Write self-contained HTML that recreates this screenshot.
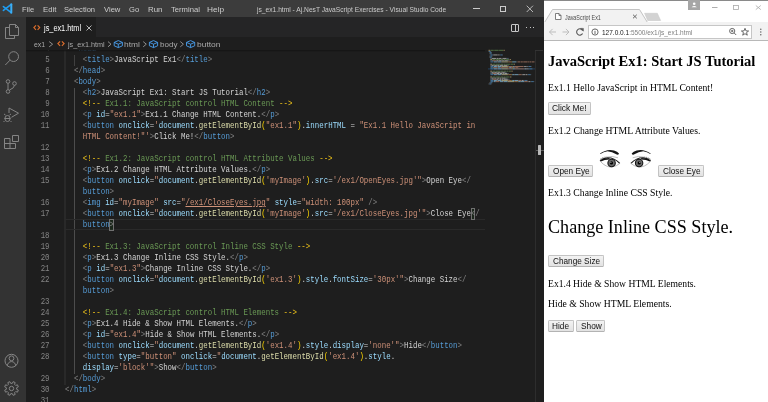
<!DOCTYPE html>
<html><head><meta charset="utf-8">
<style>
*{box-sizing:border-box}
html,body{margin:0;padding:0;width:768px;height:402px;overflow:hidden;background:#1e1e1e}
.abs{position:absolute}
#vsc{position:absolute;left:0;top:0;width:544px;height:402px;background:#1e1e1e;overflow:hidden;font-family:"Liberation Sans",sans-serif}
#title{position:absolute;left:0;top:0;width:544px;height:17px;background:#3c3c3c}
.lbl{position:absolute;font-family:"Liberation Sans",sans-serif;line-height:normal;white-space:pre;transform-origin:0 0}
#act{position:absolute;left:0;top:17px;width:26px;height:385px;background:#333333}
#tabs{position:absolute;left:26px;top:17px;width:518px;height:20px;background:#252526}
#tab1{position:absolute;left:26px;top:17px;width:70px;height:20px;background:#1e1e1e}
#bcshadow{position:absolute;left:26px;top:50px;width:459px;height:2px;background:linear-gradient(#141414,rgba(0,0,0,0))}
#ed{position:absolute;left:26px;top:50px;width:510px;height:352px;overflow:hidden;will-change:transform}
.row{position:absolute;left:38.75px;margin-top:-1px;height:11px;line-height:11px;font-family:"Liberation Mono",monospace;font-size:8.3px;transform:scaleX(0.8956);transform-origin:0 0;white-space:pre;color:#d4d4d4}
.ln{position:absolute;left:0px;width:23.6px;margin-top:-1px;text-align:right;height:11px;line-height:11px;font-family:"Liberation Mono",monospace;font-size:8.3px;transform:scaleX(0.8956);transform-origin:100% 0;color:#858585}
.ln.cur{color:#c6c6c6}
.br{color:#808080}.tag{color:#569cd6}.attr{color:#9cdcfe}.str{color:#ce9178}.txt{color:#d4d4d4}
.com{color:#6a9955}.cb{color:#f0c419}.fn{color:#dcdcaa}.par{color:#ffd700}.var{color:#9cdcfe}.op{color:#d4d4d4}
.ul{text-decoration:underline}
.bmb{position:absolute;height:12px;border:1px solid #707070;background:rgba(0,100,0,0.12)}
.guide{position:absolute;width:1px}
.g0{left:38px;width:2px;background:#292929}
.g1{left:48px;background:#404040}
.g2{left:48px;background:#4c4c4c}
.curline{position:absolute;left:38.6px;margin-top:-1px;width:420px;height:11px;border-top:1px solid #2a2a2a;border-bottom:1px solid #2a2a2a}
#chrome{position:absolute;left:544px;top:0;width:224px;height:402px;background:#ffffff;overflow:hidden;font-family:"Liberation Sans",sans-serif}
.btn{position:absolute;border:1px solid #c3c3c3;border-bottom-color:#b3b3b3;border-radius:1.5px;background:linear-gradient(#f3f3f3,#e2e2e2)}
</style></head><body>
<div id="vsc">
  <div id="title">
    <svg class="abs" style="left:0;top:0" width="20" height="17" viewBox="0 0 20 17">
      <path d="M10.9 4.6 L3.4 10.4 M3.4 6.6 L10.9 12.4" stroke="#1f9cf0" stroke-width="1.6" stroke-linecap="round"/>
      <path d="M11.3 4.3 V12.8" stroke="#3aaef6" stroke-width="2" stroke-linecap="round"/>
    </svg>
    <div class="abs" style="left:473px;top:8px;width:7px;height:1px;background:#cccccc"></div>
    <div class="abs" style="left:500px;top:6px;width:6px;height:6px;border:1px solid #cccccc"></div>
    <svg class="abs" style="left:526px;top:5px" width="8" height="8" viewBox="0 0 8 8"><path d="M0.7 0.7 L7 7 M7 0.7 L0.7 7" stroke="#cccccc" stroke-width="0.85"/></svg>
  </div>
  <div id="act">
    <!-- files -->
    <svg class="abs" style="left:0;top:0" width="26" height="385" viewBox="0 17 26 385" fill="none" stroke="#858585" stroke-width="1">
      <path d="M9.5 24.5 H15.5 L18.5 27.5 V35.5 H9.5 Z M15.5 24.5 V27.5 H18.5"/>
      <path d="M9.5 27.5 H5.5 V38.5 H14.5 V35.5"/>
      <circle cx="13.6" cy="56.6" r="4.9"/>
      <path d="M10.1 60.1 L5.3 65"/>
      <circle cx="8" cy="81.5" r="1.8"/><circle cx="14.5" cy="83.5" r="1.8"/><circle cx="8" cy="91.5" r="1.8"/>
      <path d="M8 83.3 V89.7 M14.5 85.3 Q14.5 88 9.5 90"/>
      <path d="M9 113 V108 L18.5 113.2 L11.5 117.3"/>
      <ellipse cx="7.5" cy="118.5" rx="2.6" ry="3"/>
      <path d="M4.5 118.5 H10.5 M5.5 115 L4 114 M9.5 115 L11 114 M4.5 121 L3.5 122 M10.5 121 L11.5 122"/>
      <path d="M4.5 138.5 H10 V148.5 H4.5 Z M4.5 143.5 H15.5 V148.5 H10"/>
      <path d="M12.5 135.5 H18.5 V141.5 H12.5 Z"/>
      <circle cx="11.5" cy="360.8" r="6.5"/>
      <circle cx="11.5" cy="358.3" r="2.4"/>
      <path d="M7.2 366 Q8 361.6 11.5 361.6 Q15 361.6 15.8 366"/>
      <path d="M16.64 389.27 L18.31 390.13 L17.47 392.16 L15.68 391.59 L14.59 392.68 L15.16 394.47 L13.13 395.31 L12.27 393.64 L10.73 393.64 L9.87 395.31 L7.84 394.47 L8.41 392.68 L7.32 391.59 L5.53 392.16 L4.69 390.13 L6.36 389.27 L6.36 387.73 L4.69 386.87 L5.53 384.84 L7.32 385.41 L8.41 384.32 L7.84 382.53 L9.87 381.69 L10.73 383.36 L12.27 383.36 L13.13 381.69 L15.16 382.53 L14.59 384.32 L15.68 385.41 L17.47 384.84 L18.31 386.87 L16.64 387.73 Z" stroke-linejoin="round"/>
      <circle cx="11.5" cy="388.5" r="2.2"/>
    </svg>
  </div>
  <div id="tabs"></div>
  <div id="tab1"></div>
  <svg class="abs" style="left:0;top:0" width="544" height="60" viewBox="0 0 544 60" fill="none">
    <g stroke="#dd6e2c" stroke-width="1.15" stroke-linejoin="miter">
      <path d="M36 25.4 L33.9 27.6 L36 29.8 M37.6 25.4 L39.7 27.6 L37.6 29.8"/>
      <path d="M60.1 41.3 L57.9 43.6 L60.1 45.9 M61.9 41.3 L64.1 43.6 L61.9 45.9"/>
    </g>
    <g stroke="#a9a9a9" stroke-width="0.8">
      <path d="M49.2 41.6 L52.6 44.2 L49.2 46.8"/>
      <path d="M108 41.6 L111 44.2 L108 46.8"/>
      <path d="M143.2 41.6 L146.3 44.2 L143.2 46.8"/>
      <path d="M180.3 41.6 L183.4 44.2 L180.3 46.8"/>
    </g>
    <g stroke="#4aa0f0" stroke-width="0.9" stroke-linejoin="round">
      <path d="M118.3 40.6 L122.4 42.4 V45.8 L118.3 47.6 L114.2 45.8 V42.4 Z M114.2 42.4 L118.3 44.2 L122.4 42.4 M118.3 44.2 V47.6"/>
      <g transform="translate(35.2 0)"><path d="M118.3 40.6 L122.4 42.4 V45.8 L118.3 47.6 L114.2 45.8 V42.4 Z M114.2 42.4 L118.3 44.2 L122.4 42.4 M118.3 44.2 V47.6"/></g>
      <g transform="translate(72.3 0)"><path d="M118.3 40.6 L122.4 42.4 V45.8 L118.3 47.6 L114.2 45.8 V42.4 Z M114.2 42.4 L118.3 44.2 L122.4 42.4 M118.3 44.2 V47.6"/></g>
    </g>
  </svg>
  <svg class="abs" style="left:85.6px;top:25px" width="6" height="6" viewBox="0 0 6 6"><path d="M0.5 0.5 L5.5 5.5 M5.5 0.5 L0.5 5.5" stroke="#c5c5c5" stroke-width="0.9"/></svg>
  <!-- split + more -->
  <div class="abs" style="left:511px;top:23.5px;width:8px;height:8px;border:1px solid #c5c5c5;border-radius:1px"></div>
  <div class="abs" style="left:514.5px;top:23.5px;width:1px;height:8px;background:#c5c5c5"></div>
  <div class="abs" style="left:526px;top:27px;width:1.2px;height:1.2px;background:#c5c5c5"></div>
  <div class="abs" style="left:529.5px;top:27px;width:1.2px;height:1.2px;background:#c5c5c5"></div>
  <div class="abs" style="left:533px;top:27px;width:1.2px;height:1.2px;background:#c5c5c5"></div>
  <!-- breadcrumbs -->
  <div id="ed">
  <div class="ln" style="top:-6px">4</div>
<div class="ln" style="top:5px">5</div>
<div class="ln" style="top:16px">6</div>
<div class="ln" style="top:27px">7</div>
<div class="ln" style="top:38px">8</div>
<div class="ln" style="top:49px">9</div>
<div class="ln" style="top:60px">10</div>
<div class="ln" style="top:71px">11</div>
<div class="ln" style="top:93px">12</div>
<div class="ln" style="top:104px">13</div>
<div class="ln" style="top:115px">14</div>
<div class="ln" style="top:126px">15</div>
<div class="ln" style="top:148px">16</div>
<div class="ln" style="top:159px">17</div>
<div class="ln" style="top:181px">18</div>
<div class="ln" style="top:192px">19</div>
<div class="ln" style="top:203px">20</div>
<div class="ln" style="top:214px">21</div>
<div class="ln" style="top:225px">22</div>
<div class="ln" style="top:247px">23</div>
<div class="ln" style="top:258px">24</div>
<div class="ln" style="top:269px">25</div>
<div class="ln" style="top:280px">26</div>
<div class="ln" style="top:291px">27</div>
<div class="ln" style="top:302px">28</div>
<div class="ln" style="top:324px">29</div>
<div class="ln" style="top:335px">30</div>
<div class="ln" style="top:346px">31</div>
  <div class="guide g0" style="top:-6px;height:341px"></div>
<div class="guide g1" style="top:5px;height:11px"></div>
<div class="guide g2" style="top:38px;height:286px"></div><div class="curline" style="top:170px"></div><div class="bmb" style="left:444.61px;top:158px;width:4.86px"></div><div class="bmb" style="left:83.35px;top:169px;width:4.86px"></div>
  <div class="row" style="top:-6px">  <span class="br">&lt;</span><span class="tag">head</span><span class="br">&gt;</span></div>
<div class="row" style="top:5px">    <span class="br">&lt;</span><span class="tag">title</span><span class="br">&gt;</span><span class="txt">JavaScript Ex1</span><span class="br">&lt;/</span><span class="tag">title</span><span class="br">&gt;</span></div>
<div class="row" style="top:16px">  <span class="br">&lt;/</span><span class="tag">head</span><span class="br">&gt;</span></div>
<div class="row" style="top:27px">  <span class="br">&lt;</span><span class="tag">body</span><span class="br">&gt;</span></div>
<div class="row" style="top:38px">    <span class="br">&lt;</span><span class="tag">h2</span><span class="br">&gt;</span><span class="txt">JavaScript Ex1: Start JS Tutorial</span><span class="br">&lt;/</span><span class="tag">h2</span><span class="br">&gt;</span></div>
<div class="row" style="top:49px">    <span class="cb">&lt;!--</span><span class="com"> Ex1.1: JavaScript control HTML Content </span><span class="cb">--&gt;</span></div>
<div class="row" style="top:60px">    <span class="br">&lt;</span><span class="tag">p</span> <span class="attr">id</span><span class="op">=</span><span class="str">&quot;ex1.1&quot;</span><span class="br">&gt;</span><span class="txt">Ex1.1 Change HTML Content.</span><span class="br">&lt;/</span><span class="tag">p</span><span class="br">&gt;</span></div>
<div class="row" style="top:71px">    <span class="br">&lt;</span><span class="tag">button</span> <span class="attr">onclick</span><span class="op">=</span><span class="str">&#x27;</span><span class="var">document</span><span class="op">.</span><span class="fn">getElementById</span><span class="par">(</span><span class="str">&quot;ex1.1&quot;</span><span class="par">)</span><span class="op">.</span><span class="var">innerHTML</span><span class="op"> = </span><span class="str">&quot;Ex1.1 Hello JavaScript in </span></div>
<div class="row" style="top:82px">    <span class="str">HTML Content!&quot;&#x27;</span><span class="br">&gt;</span><span class="txt">Click Me!</span><span class="br">&lt;/</span><span class="tag">button</span><span class="br">&gt;</span></div>
<div class="row" style="top:93px"></div>
<div class="row" style="top:104px">    <span class="cb">&lt;!--</span><span class="com"> Ex1.2: JavaScript control HTML Attribute Values </span><span class="cb">--&gt;</span></div>
<div class="row" style="top:115px">    <span class="br">&lt;</span><span class="tag">p</span><span class="br">&gt;</span><span class="txt">Ex1.2 Change HTML Attribute Values.</span><span class="br">&lt;/</span><span class="tag">p</span><span class="br">&gt;</span></div>
<div class="row" style="top:126px">    <span class="br">&lt;</span><span class="tag">button</span> <span class="attr">onclick</span><span class="op">=</span><span class="str">&quot;</span><span class="var">document</span><span class="op">.</span><span class="fn">getElementById</span><span class="par">(</span><span class="str">&#x27;myImage&#x27;</span><span class="par">)</span><span class="op">.</span><span class="var">src</span><span class="op">=</span><span class="str">&#x27;/ex1/OpenEyes.jpg&#x27;</span><span class="str">&quot;</span><span class="br">&gt;</span><span class="txt">Open Eye</span><span class="br">&lt;</span><span class="br">/</span></div>
<div class="row" style="top:137px">    <span class="tag">button</span><span class="br">&gt;</span></div>
<div class="row" style="top:148px">    <span class="br">&lt;</span><span class="tag">img</span> <span class="attr">id</span><span class="op">=</span><span class="str">&quot;myImage&quot;</span> <span class="attr">src</span><span class="op">=</span><span class="str">&quot;</span><span class="str ul">/ex1/CloseEyes.jpg</span><span class="str">&quot;</span> <span class="attr">style</span><span class="op">=</span><span class="str">&quot;width: 100px&quot;</span> <span class="br">/&gt;</span></div>
<div class="row" style="top:159px">    <span class="br">&lt;</span><span class="tag">button</span> <span class="attr">onclick</span><span class="op">=</span><span class="str">&quot;</span><span class="var">document</span><span class="op">.</span><span class="fn">getElementById</span><span class="par">(</span><span class="str">&#x27;myImage&#x27;</span><span class="par">)</span><span class="op">.</span><span class="var">src</span><span class="op">=</span><span class="str">&#x27;/ex1/CloseEyes.jpg&#x27;</span><span class="str">&quot;</span><span class="br">&gt;</span><span class="txt">Close Eye</span><span class="br">&lt;</span><span class="br">/</span></div>
<div class="row" style="top:170px">    <span class="tag">button</span><span class="br">&gt;</span></div>
<div class="row" style="top:181px"></div>
<div class="row" style="top:192px">    <span class="cb">&lt;!--</span><span class="com"> Ex1.3: JavaScript control Inline CSS Style </span><span class="cb">--&gt;</span></div>
<div class="row" style="top:203px">    <span class="br">&lt;</span><span class="tag">p</span><span class="br">&gt;</span><span class="txt">Ex1.3 Change Inline CSS Style.</span><span class="br">&lt;/</span><span class="tag">p</span><span class="br">&gt;</span></div>
<div class="row" style="top:214px">    <span class="br">&lt;</span><span class="tag">p</span> <span class="attr">id</span><span class="op">=</span><span class="str">&quot;ex1.3&quot;</span><span class="br">&gt;</span><span class="txt">Change Inline CSS Style.</span><span class="br">&lt;/</span><span class="tag">p</span><span class="br">&gt;</span></div>
<div class="row" style="top:225px">    <span class="br">&lt;</span><span class="tag">button</span> <span class="attr">onclick</span><span class="op">=</span><span class="str">&quot;</span><span class="var">document</span><span class="op">.</span><span class="fn">getElementById</span><span class="par">(</span><span class="str">&#x27;ex1.3&#x27;</span><span class="par">)</span><span class="op">.</span><span class="var">style</span><span class="op">.</span><span class="var">fontSize</span><span class="op">=</span><span class="str">&#x27;30px&#x27;</span><span class="str">&quot;</span><span class="br">&gt;</span><span class="txt">Change Size</span><span class="br">&lt;/</span></div>
<div class="row" style="top:236px">    <span class="tag">button</span><span class="br">&gt;</span></div>
<div class="row" style="top:247px"></div>
<div class="row" style="top:258px">    <span class="cb">&lt;!--</span><span class="com"> Ex1.4: JavaScript control HTML Elements </span><span class="cb">--&gt;</span></div>
<div class="row" style="top:269px">    <span class="br">&lt;</span><span class="tag">p</span><span class="br">&gt;</span><span class="txt">Ex1.4 Hide &amp; Show HTML Elements.</span><span class="br">&lt;/</span><span class="tag">p</span><span class="br">&gt;</span></div>
<div class="row" style="top:280px">    <span class="br">&lt;</span><span class="tag">p</span> <span class="attr">id</span><span class="op">=</span><span class="str">&quot;ex1.4&quot;</span><span class="br">&gt;</span><span class="txt">Hide &amp; Show HTML Elements.</span><span class="br">&lt;/</span><span class="tag">p</span><span class="br">&gt;</span></div>
<div class="row" style="top:291px">    <span class="br">&lt;</span><span class="tag">button</span> <span class="attr">onclick</span><span class="op">=</span><span class="str">&quot;</span><span class="var">document</span><span class="op">.</span><span class="fn">getElementById</span><span class="par">(</span><span class="str">&#x27;ex1.4&#x27;</span><span class="par">)</span><span class="op">.</span><span class="var">style</span><span class="op">.</span><span class="var">display</span><span class="op">=</span><span class="str">&#x27;none&#x27;</span><span class="str">&quot;</span><span class="br">&gt;</span><span class="txt">Hide</span><span class="br">&lt;/</span><span class="tag">button</span><span class="br">&gt;</span></div>
<div class="row" style="top:302px">    <span class="br">&lt;</span><span class="tag">button</span> <span class="attr">type</span><span class="op">=</span><span class="str">&quot;button&quot;</span> <span class="attr">onclick</span><span class="op">=</span><span class="str">&quot;</span><span class="var">document</span><span class="op">.</span><span class="fn">getElementById</span><span class="par">(</span><span class="str">&#x27;ex1.4&#x27;</span><span class="par">)</span><span class="op">.</span><span class="var">style</span><span class="op">.</span></div>
<div class="row" style="top:313px">    <span class="var">display</span><span class="op">=</span><span class="str">&#x27;block&#x27;</span><span class="str">&quot;</span><span class="br">&gt;</span><span class="txt">Show</span><span class="br">&lt;/</span><span class="tag">button</span><span class="br">&gt;</span></div>
<div class="row" style="top:324px">  <span class="br">&lt;/</span><span class="tag">body</span><span class="br">&gt;</span></div>
<div class="row" style="top:335px"><span class="br">&lt;/</span><span class="tag">html</span><span class="br">&gt;</span></div>
<div class="row" style="top:346px"></div>
  </div>
  <svg class="abs" style="left:0;top:0;opacity:0.65" width="544" height="402" viewBox="0 0 544 402"><rect x="488" y="68.16" width="47" height="1.4" fill="#264f78" opacity="0.8"/><rect x="488.50" y="49.80" width="1.76" height="1" fill="#d7ba7d"/><rect x="490.70" y="49.80" width="3.08" height="1" fill="#6a9955"/><rect x="494.22" y="49.80" width="4.40" height="1" fill="#6a9955"/><rect x="499.06" y="49.80" width="3.96" height="1" fill="#6a9955"/><rect x="503.46" y="49.80" width="1.32" height="1" fill="#d7ba7d"/><rect x="488.50" y="50.96" width="0.44" height="1" fill="#808080"/><rect x="488.94" y="50.96" width="1.76" height="1" fill="#569cd6"/><rect x="490.70" y="50.96" width="0.44" height="1" fill="#808080"/><rect x="489.38" y="52.12" width="0.44" height="1" fill="#808080"/><rect x="489.82" y="52.12" width="1.76" height="1" fill="#569cd6"/><rect x="491.58" y="52.12" width="0.44" height="1" fill="#808080"/><rect x="489.38" y="53.28" width="0.44" height="1" fill="#808080"/><rect x="489.82" y="53.28" width="1.76" height="1" fill="#569cd6"/><rect x="491.58" y="53.28" width="0.44" height="1" fill="#808080"/><rect x="490.26" y="54.44" width="0.44" height="1" fill="#808080"/><rect x="490.70" y="54.44" width="2.20" height="1" fill="#569cd6"/><rect x="492.90" y="54.44" width="0.44" height="1" fill="#808080"/><rect x="493.34" y="54.44" width="4.40" height="1" fill="#d4d4d4"/><rect x="498.18" y="54.44" width="1.32" height="1" fill="#d4d4d4"/><rect x="499.50" y="54.44" width="0.88" height="1" fill="#808080"/><rect x="500.38" y="54.44" width="2.20" height="1" fill="#569cd6"/><rect x="502.58" y="54.44" width="0.44" height="1" fill="#808080"/><rect x="489.38" y="55.60" width="0.88" height="1" fill="#808080"/><rect x="490.26" y="55.60" width="1.76" height="1" fill="#569cd6"/><rect x="492.02" y="55.60" width="0.44" height="1" fill="#808080"/><rect x="489.38" y="56.76" width="0.44" height="1" fill="#808080"/><rect x="489.82" y="56.76" width="1.76" height="1" fill="#569cd6"/><rect x="491.58" y="56.76" width="0.44" height="1" fill="#808080"/><rect x="490.26" y="57.92" width="0.44" height="1" fill="#808080"/><rect x="490.70" y="57.92" width="0.88" height="1" fill="#569cd6"/><rect x="491.58" y="57.92" width="0.44" height="1" fill="#808080"/><rect x="492.02" y="57.92" width="4.40" height="1" fill="#d4d4d4"/><rect x="496.86" y="57.92" width="1.76" height="1" fill="#d4d4d4"/><rect x="499.06" y="57.92" width="2.20" height="1" fill="#d4d4d4"/><rect x="501.70" y="57.92" width="0.88" height="1" fill="#d4d4d4"/><rect x="503.02" y="57.92" width="3.52" height="1" fill="#d4d4d4"/><rect x="506.54" y="57.92" width="0.88" height="1" fill="#808080"/><rect x="507.42" y="57.92" width="0.88" height="1" fill="#569cd6"/><rect x="508.30" y="57.92" width="0.44" height="1" fill="#808080"/><rect x="490.26" y="59.08" width="1.76" height="1" fill="#d7ba7d"/><rect x="492.46" y="59.08" width="2.64" height="1" fill="#6a9955"/><rect x="495.54" y="59.08" width="4.40" height="1" fill="#6a9955"/><rect x="500.38" y="59.08" width="3.08" height="1" fill="#6a9955"/><rect x="503.90" y="59.08" width="1.76" height="1" fill="#6a9955"/><rect x="506.10" y="59.08" width="3.08" height="1" fill="#6a9955"/><rect x="509.62" y="59.08" width="1.32" height="1" fill="#d7ba7d"/><rect x="490.26" y="60.24" width="0.44" height="1" fill="#808080"/><rect x="490.70" y="60.24" width="0.44" height="1" fill="#569cd6"/><rect x="491.58" y="60.24" width="0.88" height="1" fill="#9cdcfe"/><rect x="492.46" y="60.24" width="0.44" height="1" fill="#d4d4d4"/><rect x="492.90" y="60.24" width="3.08" height="1" fill="#ce9178"/><rect x="495.98" y="60.24" width="0.44" height="1" fill="#808080"/><rect x="496.42" y="60.24" width="2.20" height="1" fill="#d4d4d4"/><rect x="499.06" y="60.24" width="2.64" height="1" fill="#d4d4d4"/><rect x="502.14" y="60.24" width="1.76" height="1" fill="#d4d4d4"/><rect x="504.34" y="60.24" width="3.52" height="1" fill="#d4d4d4"/><rect x="507.86" y="60.24" width="0.88" height="1" fill="#808080"/><rect x="508.74" y="60.24" width="0.44" height="1" fill="#569cd6"/><rect x="509.18" y="60.24" width="0.44" height="1" fill="#808080"/><rect x="490.26" y="61.40" width="0.44" height="1" fill="#808080"/><rect x="490.70" y="61.40" width="2.64" height="1" fill="#569cd6"/><rect x="493.78" y="61.40" width="3.08" height="1" fill="#9cdcfe"/><rect x="496.86" y="61.40" width="0.44" height="1" fill="#d4d4d4"/><rect x="497.30" y="61.40" width="0.44" height="1" fill="#ce9178"/><rect x="497.74" y="61.40" width="3.52" height="1" fill="#9cdcfe"/><rect x="501.26" y="61.40" width="0.44" height="1" fill="#d4d4d4"/><rect x="501.70" y="61.40" width="6.16" height="1" fill="#dcdcaa"/><rect x="507.86" y="61.40" width="0.44" height="1" fill="#ffd700"/><rect x="508.30" y="61.40" width="3.08" height="1" fill="#ce9178"/><rect x="511.38" y="61.40" width="0.44" height="1" fill="#ffd700"/><rect x="511.82" y="61.40" width="0.44" height="1" fill="#d4d4d4"/><rect x="512.26" y="61.40" width="3.96" height="1" fill="#9cdcfe"/><rect x="516.66" y="61.40" width="0.44" height="1" fill="#d4d4d4"/><rect x="517.54" y="61.40" width="2.64" height="1" fill="#ce9178"/><rect x="520.62" y="61.40" width="2.20" height="1" fill="#ce9178"/><rect x="523.26" y="61.40" width="4.40" height="1" fill="#ce9178"/><rect x="528.10" y="61.40" width="0.88" height="1" fill="#ce9178"/><rect x="529.42" y="61.40" width="1.76" height="1" fill="#ce9178"/><rect x="531.62" y="61.40" width="2.88" height="1" fill="#ce9178"/><rect x="490.26" y="63.72" width="1.76" height="1" fill="#d7ba7d"/><rect x="492.46" y="63.72" width="2.64" height="1" fill="#6a9955"/><rect x="495.54" y="63.72" width="4.40" height="1" fill="#6a9955"/><rect x="500.38" y="63.72" width="3.08" height="1" fill="#6a9955"/><rect x="503.90" y="63.72" width="1.76" height="1" fill="#6a9955"/><rect x="506.10" y="63.72" width="3.96" height="1" fill="#6a9955"/><rect x="510.50" y="63.72" width="2.64" height="1" fill="#6a9955"/><rect x="513.58" y="63.72" width="1.32" height="1" fill="#d7ba7d"/><rect x="490.26" y="64.88" width="0.44" height="1" fill="#808080"/><rect x="490.70" y="64.88" width="0.44" height="1" fill="#569cd6"/><rect x="491.14" y="64.88" width="0.44" height="1" fill="#808080"/><rect x="491.58" y="64.88" width="2.20" height="1" fill="#d4d4d4"/><rect x="494.22" y="64.88" width="2.64" height="1" fill="#d4d4d4"/><rect x="497.30" y="64.88" width="1.76" height="1" fill="#d4d4d4"/><rect x="499.50" y="64.88" width="3.96" height="1" fill="#d4d4d4"/><rect x="503.90" y="64.88" width="3.08" height="1" fill="#d4d4d4"/><rect x="506.98" y="64.88" width="0.88" height="1" fill="#808080"/><rect x="507.86" y="64.88" width="0.44" height="1" fill="#569cd6"/><rect x="508.30" y="64.88" width="0.44" height="1" fill="#808080"/><rect x="490.26" y="66.04" width="0.44" height="1" fill="#808080"/><rect x="490.70" y="66.04" width="2.64" height="1" fill="#569cd6"/><rect x="493.78" y="66.04" width="3.08" height="1" fill="#9cdcfe"/><rect x="496.86" y="66.04" width="0.44" height="1" fill="#d4d4d4"/><rect x="497.30" y="66.04" width="0.44" height="1" fill="#ce9178"/><rect x="497.74" y="66.04" width="3.52" height="1" fill="#9cdcfe"/><rect x="501.26" y="66.04" width="0.44" height="1" fill="#d4d4d4"/><rect x="501.70" y="66.04" width="6.16" height="1" fill="#dcdcaa"/><rect x="507.86" y="66.04" width="0.44" height="1" fill="#ffd700"/><rect x="508.30" y="66.04" width="3.96" height="1" fill="#ce9178"/><rect x="512.26" y="66.04" width="0.44" height="1" fill="#ffd700"/><rect x="512.70" y="66.04" width="0.44" height="1" fill="#d4d4d4"/><rect x="513.14" y="66.04" width="1.32" height="1" fill="#9cdcfe"/><rect x="514.46" y="66.04" width="0.44" height="1" fill="#d4d4d4"/><rect x="514.90" y="66.04" width="8.36" height="1" fill="#ce9178"/><rect x="523.26" y="66.04" width="0.44" height="1" fill="#ce9178"/><rect x="523.70" y="66.04" width="0.44" height="1" fill="#808080"/><rect x="524.14" y="66.04" width="1.76" height="1" fill="#d4d4d4"/><rect x="526.34" y="66.04" width="1.32" height="1" fill="#d4d4d4"/><rect x="527.66" y="66.04" width="0.44" height="1" fill="#808080"/><rect x="528.10" y="66.04" width="0.44" height="1" fill="#808080"/><rect x="528.54" y="66.04" width="2.64" height="1" fill="#569cd6"/><rect x="531.18" y="66.04" width="0.44" height="1" fill="#808080"/><rect x="490.26" y="67.20" width="0.44" height="1" fill="#808080"/><rect x="490.70" y="67.20" width="1.32" height="1" fill="#569cd6"/><rect x="492.46" y="67.20" width="0.88" height="1" fill="#9cdcfe"/><rect x="493.34" y="67.20" width="0.44" height="1" fill="#d4d4d4"/><rect x="493.78" y="67.20" width="3.96" height="1" fill="#ce9178"/><rect x="498.18" y="67.20" width="1.32" height="1" fill="#9cdcfe"/><rect x="499.50" y="67.20" width="0.44" height="1" fill="#d4d4d4"/><rect x="499.94" y="67.20" width="0.44" height="1" fill="#ce9178"/><rect x="500.38" y="67.20" width="7.92" height="1" fill="#ce9178"/><rect x="508.30" y="67.20" width="0.44" height="1" fill="#ce9178"/><rect x="509.18" y="67.20" width="2.20" height="1" fill="#9cdcfe"/><rect x="511.38" y="67.20" width="0.44" height="1" fill="#d4d4d4"/><rect x="511.82" y="67.20" width="3.08" height="1" fill="#ce9178"/><rect x="515.34" y="67.20" width="2.64" height="1" fill="#ce9178"/><rect x="518.42" y="67.20" width="0.88" height="1" fill="#808080"/><rect x="490.26" y="68.36" width="0.44" height="1" fill="#808080"/><rect x="490.70" y="68.36" width="2.64" height="1" fill="#569cd6"/><rect x="493.78" y="68.36" width="3.08" height="1" fill="#9cdcfe"/><rect x="496.86" y="68.36" width="0.44" height="1" fill="#d4d4d4"/><rect x="497.30" y="68.36" width="0.44" height="1" fill="#ce9178"/><rect x="497.74" y="68.36" width="3.52" height="1" fill="#9cdcfe"/><rect x="501.26" y="68.36" width="0.44" height="1" fill="#d4d4d4"/><rect x="501.70" y="68.36" width="6.16" height="1" fill="#dcdcaa"/><rect x="507.86" y="68.36" width="0.44" height="1" fill="#ffd700"/><rect x="508.30" y="68.36" width="3.96" height="1" fill="#ce9178"/><rect x="512.26" y="68.36" width="0.44" height="1" fill="#ffd700"/><rect x="512.70" y="68.36" width="0.44" height="1" fill="#d4d4d4"/><rect x="513.14" y="68.36" width="1.32" height="1" fill="#9cdcfe"/><rect x="514.46" y="68.36" width="0.44" height="1" fill="#d4d4d4"/><rect x="514.90" y="68.36" width="8.80" height="1" fill="#ce9178"/><rect x="523.70" y="68.36" width="0.44" height="1" fill="#ce9178"/><rect x="524.14" y="68.36" width="0.44" height="1" fill="#808080"/><rect x="524.58" y="68.36" width="2.20" height="1" fill="#d4d4d4"/><rect x="527.22" y="68.36" width="1.32" height="1" fill="#d4d4d4"/><rect x="528.54" y="68.36" width="0.44" height="1" fill="#808080"/><rect x="528.98" y="68.36" width="0.44" height="1" fill="#808080"/><rect x="529.42" y="68.36" width="2.64" height="1" fill="#569cd6"/><rect x="532.06" y="68.36" width="0.44" height="1" fill="#808080"/><rect x="490.26" y="70.68" width="1.76" height="1" fill="#d7ba7d"/><rect x="492.46" y="70.68" width="2.64" height="1" fill="#6a9955"/><rect x="495.54" y="70.68" width="4.40" height="1" fill="#6a9955"/><rect x="500.38" y="70.68" width="3.08" height="1" fill="#6a9955"/><rect x="503.90" y="70.68" width="2.64" height="1" fill="#6a9955"/><rect x="506.98" y="70.68" width="1.32" height="1" fill="#6a9955"/><rect x="508.74" y="70.68" width="2.20" height="1" fill="#6a9955"/><rect x="511.38" y="70.68" width="1.32" height="1" fill="#d7ba7d"/><rect x="490.26" y="71.84" width="0.44" height="1" fill="#808080"/><rect x="490.70" y="71.84" width="0.44" height="1" fill="#569cd6"/><rect x="491.14" y="71.84" width="0.44" height="1" fill="#808080"/><rect x="491.58" y="71.84" width="2.20" height="1" fill="#d4d4d4"/><rect x="494.22" y="71.84" width="2.64" height="1" fill="#d4d4d4"/><rect x="497.30" y="71.84" width="2.64" height="1" fill="#d4d4d4"/><rect x="500.38" y="71.84" width="1.32" height="1" fill="#d4d4d4"/><rect x="502.14" y="71.84" width="2.64" height="1" fill="#d4d4d4"/><rect x="504.78" y="71.84" width="0.88" height="1" fill="#808080"/><rect x="505.66" y="71.84" width="0.44" height="1" fill="#569cd6"/><rect x="506.10" y="71.84" width="0.44" height="1" fill="#808080"/><rect x="490.26" y="73.00" width="0.44" height="1" fill="#808080"/><rect x="490.70" y="73.00" width="0.44" height="1" fill="#569cd6"/><rect x="491.58" y="73.00" width="0.88" height="1" fill="#9cdcfe"/><rect x="492.46" y="73.00" width="0.44" height="1" fill="#d4d4d4"/><rect x="492.90" y="73.00" width="3.08" height="1" fill="#ce9178"/><rect x="495.98" y="73.00" width="0.44" height="1" fill="#808080"/><rect x="496.42" y="73.00" width="2.64" height="1" fill="#d4d4d4"/><rect x="499.50" y="73.00" width="2.64" height="1" fill="#d4d4d4"/><rect x="502.58" y="73.00" width="1.32" height="1" fill="#d4d4d4"/><rect x="504.34" y="73.00" width="2.64" height="1" fill="#d4d4d4"/><rect x="506.98" y="73.00" width="0.88" height="1" fill="#808080"/><rect x="507.86" y="73.00" width="0.44" height="1" fill="#569cd6"/><rect x="508.30" y="73.00" width="0.44" height="1" fill="#808080"/><rect x="490.26" y="74.16" width="0.44" height="1" fill="#808080"/><rect x="490.70" y="74.16" width="2.64" height="1" fill="#569cd6"/><rect x="493.78" y="74.16" width="3.08" height="1" fill="#9cdcfe"/><rect x="496.86" y="74.16" width="0.44" height="1" fill="#d4d4d4"/><rect x="497.30" y="74.16" width="0.44" height="1" fill="#ce9178"/><rect x="497.74" y="74.16" width="3.52" height="1" fill="#9cdcfe"/><rect x="501.26" y="74.16" width="0.44" height="1" fill="#d4d4d4"/><rect x="501.70" y="74.16" width="6.16" height="1" fill="#dcdcaa"/><rect x="507.86" y="74.16" width="0.44" height="1" fill="#ffd700"/><rect x="508.30" y="74.16" width="3.08" height="1" fill="#ce9178"/><rect x="511.38" y="74.16" width="0.44" height="1" fill="#ffd700"/><rect x="511.82" y="74.16" width="0.44" height="1" fill="#d4d4d4"/><rect x="512.26" y="74.16" width="2.20" height="1" fill="#9cdcfe"/><rect x="514.46" y="74.16" width="0.44" height="1" fill="#d4d4d4"/><rect x="514.90" y="74.16" width="3.52" height="1" fill="#9cdcfe"/><rect x="518.42" y="74.16" width="0.44" height="1" fill="#d4d4d4"/><rect x="518.86" y="74.16" width="2.64" height="1" fill="#ce9178"/><rect x="521.50" y="74.16" width="0.44" height="1" fill="#ce9178"/><rect x="521.94" y="74.16" width="0.44" height="1" fill="#808080"/><rect x="522.38" y="74.16" width="2.64" height="1" fill="#d4d4d4"/><rect x="525.46" y="74.16" width="1.76" height="1" fill="#d4d4d4"/><rect x="527.22" y="74.16" width="0.88" height="1" fill="#808080"/><rect x="528.10" y="74.16" width="2.64" height="1" fill="#569cd6"/><rect x="530.74" y="74.16" width="0.44" height="1" fill="#808080"/><rect x="490.26" y="76.48" width="1.76" height="1" fill="#d7ba7d"/><rect x="492.46" y="76.48" width="2.64" height="1" fill="#6a9955"/><rect x="495.54" y="76.48" width="4.40" height="1" fill="#6a9955"/><rect x="500.38" y="76.48" width="3.08" height="1" fill="#6a9955"/><rect x="503.90" y="76.48" width="1.76" height="1" fill="#6a9955"/><rect x="506.10" y="76.48" width="3.52" height="1" fill="#6a9955"/><rect x="510.06" y="76.48" width="1.32" height="1" fill="#d7ba7d"/><rect x="490.26" y="77.64" width="0.44" height="1" fill="#808080"/><rect x="490.70" y="77.64" width="0.44" height="1" fill="#569cd6"/><rect x="491.14" y="77.64" width="0.44" height="1" fill="#808080"/><rect x="491.58" y="77.64" width="2.20" height="1" fill="#d4d4d4"/><rect x="494.22" y="77.64" width="1.76" height="1" fill="#d4d4d4"/><rect x="496.42" y="77.64" width="0.44" height="1" fill="#d4d4d4"/><rect x="497.30" y="77.64" width="1.76" height="1" fill="#d4d4d4"/><rect x="499.50" y="77.64" width="1.76" height="1" fill="#d4d4d4"/><rect x="501.70" y="77.64" width="3.96" height="1" fill="#d4d4d4"/><rect x="505.66" y="77.64" width="0.88" height="1" fill="#808080"/><rect x="506.54" y="77.64" width="0.44" height="1" fill="#569cd6"/><rect x="506.98" y="77.64" width="0.44" height="1" fill="#808080"/><rect x="490.26" y="78.80" width="0.44" height="1" fill="#808080"/><rect x="490.70" y="78.80" width="0.44" height="1" fill="#569cd6"/><rect x="491.58" y="78.80" width="0.88" height="1" fill="#9cdcfe"/><rect x="492.46" y="78.80" width="0.44" height="1" fill="#d4d4d4"/><rect x="492.90" y="78.80" width="3.08" height="1" fill="#ce9178"/><rect x="495.98" y="78.80" width="0.44" height="1" fill="#808080"/><rect x="496.42" y="78.80" width="1.76" height="1" fill="#d4d4d4"/><rect x="498.62" y="78.80" width="0.44" height="1" fill="#d4d4d4"/><rect x="499.50" y="78.80" width="1.76" height="1" fill="#d4d4d4"/><rect x="501.70" y="78.80" width="1.76" height="1" fill="#d4d4d4"/><rect x="503.90" y="78.80" width="3.96" height="1" fill="#d4d4d4"/><rect x="507.86" y="78.80" width="0.88" height="1" fill="#808080"/><rect x="508.74" y="78.80" width="0.44" height="1" fill="#569cd6"/><rect x="509.18" y="78.80" width="0.44" height="1" fill="#808080"/><rect x="490.26" y="79.96" width="0.44" height="1" fill="#808080"/><rect x="490.70" y="79.96" width="2.64" height="1" fill="#569cd6"/><rect x="493.78" y="79.96" width="3.08" height="1" fill="#9cdcfe"/><rect x="496.86" y="79.96" width="0.44" height="1" fill="#d4d4d4"/><rect x="497.30" y="79.96" width="0.44" height="1" fill="#ce9178"/><rect x="497.74" y="79.96" width="3.52" height="1" fill="#9cdcfe"/><rect x="501.26" y="79.96" width="0.44" height="1" fill="#d4d4d4"/><rect x="501.70" y="79.96" width="6.16" height="1" fill="#dcdcaa"/><rect x="507.86" y="79.96" width="0.44" height="1" fill="#ffd700"/><rect x="508.30" y="79.96" width="3.08" height="1" fill="#ce9178"/><rect x="511.38" y="79.96" width="0.44" height="1" fill="#ffd700"/><rect x="511.82" y="79.96" width="0.44" height="1" fill="#d4d4d4"/><rect x="512.26" y="79.96" width="2.20" height="1" fill="#9cdcfe"/><rect x="514.46" y="79.96" width="0.44" height="1" fill="#d4d4d4"/><rect x="514.90" y="79.96" width="3.08" height="1" fill="#9cdcfe"/><rect x="517.98" y="79.96" width="0.44" height="1" fill="#d4d4d4"/><rect x="518.42" y="79.96" width="2.64" height="1" fill="#ce9178"/><rect x="521.06" y="79.96" width="0.44" height="1" fill="#ce9178"/><rect x="521.50" y="79.96" width="0.44" height="1" fill="#808080"/><rect x="521.94" y="79.96" width="1.76" height="1" fill="#d4d4d4"/><rect x="523.70" y="79.96" width="0.88" height="1" fill="#808080"/><rect x="524.58" y="79.96" width="2.64" height="1" fill="#569cd6"/><rect x="527.22" y="79.96" width="0.44" height="1" fill="#808080"/><rect x="490.26" y="81.12" width="0.44" height="1" fill="#808080"/><rect x="490.70" y="81.12" width="2.64" height="1" fill="#569cd6"/><rect x="493.78" y="81.12" width="1.76" height="1" fill="#9cdcfe"/><rect x="495.54" y="81.12" width="0.44" height="1" fill="#d4d4d4"/><rect x="495.98" y="81.12" width="3.52" height="1" fill="#ce9178"/><rect x="499.94" y="81.12" width="3.08" height="1" fill="#9cdcfe"/><rect x="503.02" y="81.12" width="0.44" height="1" fill="#d4d4d4"/><rect x="503.46" y="81.12" width="0.44" height="1" fill="#ce9178"/><rect x="503.90" y="81.12" width="3.52" height="1" fill="#9cdcfe"/><rect x="507.42" y="81.12" width="0.44" height="1" fill="#d4d4d4"/><rect x="507.86" y="81.12" width="6.16" height="1" fill="#dcdcaa"/><rect x="514.02" y="81.12" width="0.44" height="1" fill="#ffd700"/><rect x="514.46" y="81.12" width="3.08" height="1" fill="#ce9178"/><rect x="517.54" y="81.12" width="0.44" height="1" fill="#ffd700"/><rect x="517.98" y="81.12" width="0.44" height="1" fill="#d4d4d4"/><rect x="518.42" y="81.12" width="2.20" height="1" fill="#9cdcfe"/><rect x="520.62" y="81.12" width="0.44" height="1" fill="#d4d4d4"/><rect x="521.06" y="81.12" width="3.08" height="1" fill="#9cdcfe"/><rect x="524.14" y="81.12" width="0.44" height="1" fill="#d4d4d4"/><rect x="524.58" y="81.12" width="3.08" height="1" fill="#ce9178"/><rect x="527.66" y="81.12" width="0.44" height="1" fill="#ce9178"/><rect x="528.10" y="81.12" width="0.44" height="1" fill="#808080"/><rect x="528.54" y="81.12" width="1.76" height="1" fill="#d4d4d4"/><rect x="530.30" y="81.12" width="0.88" height="1" fill="#808080"/><rect x="531.18" y="81.12" width="2.64" height="1" fill="#569cd6"/><rect x="533.82" y="81.12" width="0.44" height="1" fill="#808080"/><rect x="489.38" y="82.28" width="0.88" height="1" fill="#808080"/><rect x="490.26" y="82.28" width="1.76" height="1" fill="#569cd6"/><rect x="492.02" y="82.28" width="0.44" height="1" fill="#808080"/><rect x="488.50" y="83.44" width="0.88" height="1" fill="#808080"/><rect x="489.38" y="83.44" width="1.76" height="1" fill="#569cd6"/><rect x="491.14" y="83.44" width="0.44" height="1" fill="#808080"/></svg>
  <div id="bcshadow"></div>
  <div class="abs" style="left:535px;top:50px;width:1px;height:352px;background:#2d2d2d"></div>
  <div class="abs" style="left:535px;top:50px;width:8px;height:1px;background:#333"></div>
  <div class="abs" style="left:535.5px;top:149.5px;width:8px;height:1px;background:#5a5a5a"></div>
  <div class="abs" style="left:538px;top:145px;width:3px;height:10px;background:#b8b8b8;border-radius:0.5px"></div>
</div>
<div id="chrome">

  <div class="abs" style="left:0;top:0;width:224px;height:1px;background:#8a8a8a"></div>
  <div class="abs" style="left:0;top:22px;width:224px;height:18px;background:#f2f2f2"></div>
  <div class="abs" style="left:0;top:40px;width:224px;height:1px;background:#b8b8b8"></div>
  <svg class="abs" style="left:0;top:0" width="224" height="41" viewBox="544 0 224 41">
    <path d="M544.5 22.5 L552.5 9.5 H639.5 L647.5 22.5" fill="#f2f2f2" stroke="#c3c3c3" stroke-width="1"/>
    <rect x="544" y="22" width="224" height="3" fill="#f2f2f2"/>
    <path d="M644.6 13.3 H657.3 L660.6 20.5 H647.7 Z" fill="#d3d3d3" stroke="#cacaca" stroke-width="0.6"/>
    <rect x="688" y="0" width="12" height="10" fill="#a6a6a6"/>
    <circle cx="694.2" cy="3.7" r="1.3" fill="#fff"/>
    <path d="M691.6 7.2 Q694.2 4.6 696.8 7.2 Z" fill="#fff"/>
    <path d="M712 7.5 H717.5" stroke="#999" stroke-width="0.8"/>
    <rect x="733.5" y="5.5" width="5" height="4" fill="none" stroke="#aaa" stroke-width="0.8"/>
    <path d="M755.8 5.5 L760.8 9.6 M760.8 5.5 L755.8 9.6" stroke="#aaa" stroke-width="0.8"/>
    <!-- tab icon -->
    <path d="M555.5 13.5 H559 L561 15.5 V19.5 H555.5 Z M559 13.5 V15.5 H561" fill="#fff" stroke="#5f5f5f" stroke-width="0.8"/>
    <path d="M633 14.7 L636.8 18.3 M636.8 14.7 L633 18.3" stroke="#5a5a5a" stroke-width="0.9"/>
    <!-- nav -->
    <path d="M549.5 32 H556 M549.5 32 L552.6 28.9 M549.5 32 L552.6 35.1" fill="none" stroke="#bdbdbd" stroke-width="1"/>
    <path d="M569 32 H562.5 M569 32 L565.9 28.9 M569 32 L565.9 35.1" fill="none" stroke="#bdbdbd" stroke-width="1"/>
    <path d="M582.6 30.4 A3.2 3.2 0 1 0 582.6 33.6" fill="none" stroke="#5a5a5a" stroke-width="1.1"/>
    <path d="M580.6 28.4 L583.4 28.4 L583.4 31.2 Z" fill="#5a5a5a" stroke="#5a5a5a" stroke-width="0.6"/>
    <!-- omnibox -->
    <rect x="588.5" y="25.5" width="163" height="13" fill="#fff" stroke="#c6c6c6" stroke-width="1"/>
    <circle cx="595" cy="32" r="3.1" fill="none" stroke="#5a5a5a" stroke-width="0.9"/>
    <path d="M595 31 V34 M595 29.6 V30.2" stroke="#5a5a5a" stroke-width="0.9"/>
    <!-- zoom -->
    <circle cx="732.2" cy="31" r="2.6" fill="none" stroke="#5a5a5a" stroke-width="0.9"/>
    <path d="M734 32.8 L736.2 35 M731 31 H733.4 M732.2 29.8 V32.2" stroke="#5a5a5a" stroke-width="0.9"/>
    <path d="M745 28.3 L746 30.9 L748.6 31 L746.5 32.6 L747.3 35.2 L745 33.7 L742.7 35.2 L743.5 32.6 L741.4 31 L744 30.9 Z" fill="none" stroke="#5a5a5a" stroke-width="0.9"/>
    <circle cx="760.8" cy="29.3" r="0.7" fill="#5a5a5a"/><circle cx="760.8" cy="32" r="0.7" fill="#5a5a5a"/><circle cx="760.8" cy="34.7" r="0.7" fill="#5a5a5a"/>
  </svg>
  <div class="btn" style="left:4.3px;top:102.3px;width:42.6px;height:12.3px"></div>
  <div class="btn" style="left:4.3px;top:164.6px;width:44.8px;height:12.5px"></div>
  <div class="btn" style="left:114.3px;top:164.6px;width:45.9px;height:12.5px"></div>
  <div class="btn" style="left:4.4px;top:255.3px;width:55.3px;height:12.2px"></div>
  <div class="btn" style="left:4.4px;top:320.2px;width:25.2px;height:12.2px"></div>
  <div class="btn" style="left:32.4px;top:320.2px;width:29.1px;height:12.2px"></div>

  <svg class="abs" style="left:0;top:0" width="224" height="402" viewBox="544 0 224 402">
    <g id="eyeL">
      <path d="M600 153.6 Q607.5 148.4 614 150.6 Q617.5 151.8 619 153.4 Q618.6 155 616.8 154.6 Q612 151.4 607.5 151.3 Q603.5 151.7 600.4 154 Z" fill="#151515"/>
      <path d="M606.5 157.1 Q612 155.4 618 157.8" fill="none" stroke="#c4c4c4" stroke-width="1"/>
      <path d="M600 161.2 Q603 158.2 607.5 157.8 Q614 157.6 619.8 163.4" fill="none" stroke="#1a1a1a" stroke-width="1.1"/>
      <path d="M600.6 160.8 Q604 158.8 609.5 158.7" fill="none" stroke="#111" stroke-width="1.5"/>
      <path d="M600.4 159.8 L601.2 158.2 M602 159.2 L602.6 157.4 M603.8 158.5 L604.3 156.8 M605.6 158.2 L606 156.6" stroke="#333" stroke-width="0.55"/>
      <path d="M600.5 161.5 Q606 167.6 612 166.9 Q617 166.1 619.8 163.4" fill="none" stroke="#a8a8a8" stroke-width="0.8"/>
      <circle cx="611.6" cy="163" r="3.7" fill="#6a6a6a" stroke="#151515" stroke-width="1.1"/>
      <circle cx="611.5" cy="162.9" r="1.6" fill="#000"/>
      <circle cx="610.9" cy="162.2" r="0.55" fill="#eee"/>
    </g>
    <g transform="translate(1250.7 0) scale(-1 1)">
      <path d="M600 153.6 Q607.5 148.4 614 150.6 Q617.5 151.8 619 153.4 Q618.6 155 616.8 154.6 Q612 151.4 607.5 151.3 Q603.5 151.7 600.4 154 Z" fill="#151515"/>
      <path d="M606.5 157.1 Q612 155.4 618 157.8" fill="none" stroke="#c4c4c4" stroke-width="1"/>
      <path d="M600 161.2 Q603 158.2 607.5 157.8 Q614 157.6 619.8 163.4" fill="none" stroke="#1a1a1a" stroke-width="1.1"/>
      <path d="M600.6 160.8 Q604 158.8 609.5 158.7" fill="none" stroke="#111" stroke-width="1.5"/>
      <path d="M600.4 159.8 L601.2 158.2 M602 159.2 L602.6 157.4 M603.8 158.5 L604.3 156.8 M605.6 158.2 L606 156.6" stroke="#333" stroke-width="0.55"/>
      <path d="M600.5 161.5 Q606 167.6 612 166.9 Q617 166.1 619.8 163.4" fill="none" stroke="#a8a8a8" stroke-width="0.8"/>
      <circle cx="611.6" cy="163" r="3.7" fill="#6a6a6a" stroke="#151515" stroke-width="1.1"/>
      <circle cx="611.5" cy="162.9" r="1.6" fill="#000"/>
      <circle cx="610.9" cy="162.2" r="0.55" fill="#eee"/>
    </g>
  </svg>

</div>
<div class="lbl" style="left:22.31px;top:4.9px;font-size:8px;color:#cccccc;transform:scaleX(0.943)">File</div>
<div class="lbl" style="left:42.6px;top:4.9px;font-size:8px;color:#cccccc;transform:scaleX(0.968)">Edit</div>
<div class="lbl" style="left:64.45px;top:4.9px;font-size:8px;color:#cccccc;transform:scaleX(0.944)">Selection</div>
<div class="lbl" style="left:104.0px;top:4.9px;font-size:8px;color:#cccccc;transform:scaleX(0.951)">View</div>
<div class="lbl" style="left:129.14px;top:4.9px;font-size:8px;color:#cccccc;transform:scaleX(0.95)">Go</div>
<div class="lbl" style="left:147.68px;top:4.9px;font-size:8px;color:#cccccc;transform:scaleX(0.985)">Run</div>
<div class="lbl" style="left:170.58px;top:4.9px;font-size:8px;color:#cccccc;transform:scaleX(0.955)">Terminal</div>
<div class="lbl" style="left:206.85px;top:4.9px;font-size:8px;color:#cccccc;transform:scaleX(1.039)">Help</div>
<div class="lbl" style="left:257.23px;top:5.0px;font-size:7.2px;color:#cccccc;transform:scaleX(0.928)">js_ex1.html - Aj.NesT JavaScript Exercises - Visual Studio Code</div>
<div class="lbl" style="left:43.72px;top:22.8px;font-size:8.5px;color:#ffffff;transform:scaleX(0.863)">js_ex1.html</div>
<div class="lbl" style="left:34.48px;top:39.9px;font-size:8px;color:#a9a9a9;transform:scaleX(0.858)">ex1</div>
<div class="lbl" style="left:68.13px;top:39.9px;font-size:8px;color:#a9a9a9;transform:scaleX(0.904)">js_ex1.html</div>
<div class="lbl" style="left:124.48px;top:39.9px;font-size:8px;color:#a9a9a9;transform:scaleX(1.048)">html</div>
<div class="lbl" style="left:160.0px;top:39.9px;font-size:8px;color:#a9a9a9;transform:scaleX(1.003)">body</div>
<div class="lbl" style="left:197.27px;top:39.9px;font-size:8px;color:#a9a9a9;transform:scaleX(1.054)">button</div>
<div class="lbl" style="left:564.5px;top:14.0px;font-size:6.8px;color:#4a4a4a;transform:scaleX(0.791)">JavaScript Ex1</div>
<div class="lbl" style="left:601.96px;top:27.7px;font-size:7.4px;color:#808080;transform:scaleX(0.88)"><span style="color:#222">127.0.0.1</span>:5500/ex1/js_ex1.html</div>
<div class="lbl" style="left:547.77px;top:52.8px;font-size:14.4px;color:#000;transform:scaleX(1.009);font-weight:bold;font-family:'Liberation Serif'">JavaScript Ex1: Start JS Tutorial</div>
<div class="lbl" style="left:548.15px;top:81.6px;font-size:9.6px;color:#000;transform:scaleX(1.009);font-family:'Liberation Serif'">Ex1.1 Hello JavaScript in HTML Content!</div>
<div class="lbl" style="left:548.15px;top:125.1px;font-size:9.6px;color:#000;transform:scaleX(1.014);font-family:'Liberation Serif'">Ex1.2 Change HTML Attribute Values.</div>
<div class="lbl" style="left:548.15px;top:187.3px;font-size:9.6px;color:#000;transform:scaleX(1.011);font-family:'Liberation Serif'">Ex1.3 Change Inline CSS Style.</div>
<div class="lbl" style="left:548.15px;top:217.2px;font-size:18px;color:#000;transform:scaleX(1.006);font-family:'Liberation Serif'">Change Inline CSS Style.</div>
<div class="lbl" style="left:548.15px;top:277.9px;font-size:9.6px;color:#000;transform:scaleX(1.003);font-family:'Liberation Serif'">Ex1.4 Hide &amp; Show HTML Elements.</div>
<div class="lbl" style="left:548.15px;top:298.3px;font-size:9.6px;color:#000;transform:scaleX(1.01);font-family:'Liberation Serif'">Hide &amp; Show HTML Elements.</div>
<div class="lbl" style="left:552.36px;top:103.9px;font-size:8.2px;color:#111;transform:scaleX(1.029)">Click Me!</div>
<div class="lbl" style="left:552.62px;top:166.8px;font-size:8.2px;color:#111;transform:scaleX(1.008)">Open Eye</div>
<div class="lbl" style="left:662.62px;top:166.8px;font-size:8.2px;color:#111;transform:scaleX(1.005)">Close Eye</div>
<div class="lbl" style="left:552.52px;top:257.3px;font-size:8.2px;color:#111;transform:scaleX(1.004)">Change Size</div>
<div class="lbl" style="left:552.47px;top:321.8px;font-size:8.2px;color:#111;transform:scaleX(1.008)">Hide</div>
<div class="lbl" style="left:580.52px;top:321.8px;font-size:8.2px;color:#111;transform:scaleX(1.019)">Show</div>
</body></html>
